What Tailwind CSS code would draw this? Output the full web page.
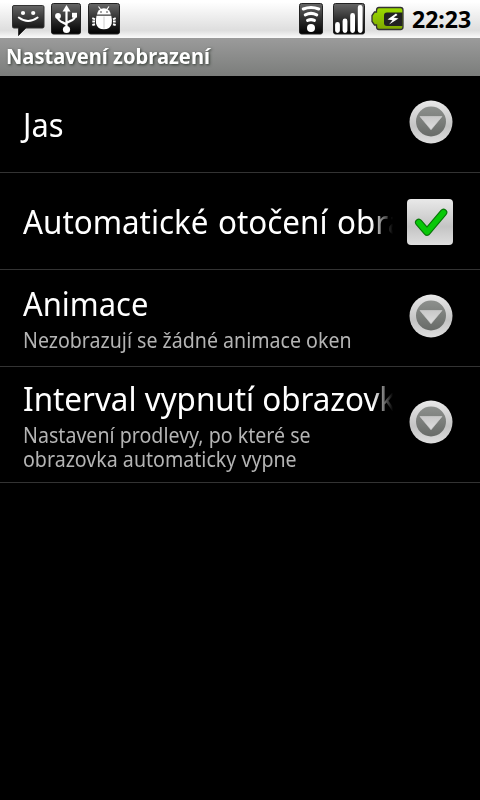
<!DOCTYPE html>
<html lang="cs">
<head>
<meta charset="utf-8">
<title>Nastavení zobrazení</title>
<script src="https://cdn.jsdelivr.net/npm/@tailwindcss/browser@4"></script>
</head>
<body class="bg-black text-white w-[480px] h-[800px] overflow-hidden font-['Noto_Sans','Open_Sans',sans-serif]">
<svg class="absolute w-0 h-0" aria-hidden="true">
  <defs>
    <linearGradient id="dark" x1="0" y1="0" x2="0" y2="1"><stop offset="0" stop-color="#666"/><stop offset=".5" stop-color="#303030"/><stop offset="1" stop-color="#000"/></linearGradient>
    <linearGradient id="ring" x1="0" y1="0" x2="0" y2="1"><stop offset="0" stop-color="#e9e9e9"/><stop offset=".6" stop-color="#c4c4c4"/><stop offset="1" stop-color="#dedede"/></linearGradient>
    <linearGradient id="disc" x1="0" y1="0" x2="0" y2="1"><stop offset="0" stop-color="#8d908d"/><stop offset="1" stop-color="#686b68"/></linearGradient>
    <linearGradient id="tri" x1="0" y1="0" x2="0" y2="1"><stop offset="0" stop-color="#c8c8c8"/><stop offset="1" stop-color="#dedede"/></linearGradient>
    <linearGradient id="green" x1="0" y1="0" x2="0" y2="1"><stop offset="0" stop-color="#9bdc00"/><stop offset="1" stop-color="#7fa800"/></linearGradient>
    <symbol id="arrow" viewBox="0 0 44 44">
      <circle cx="22" cy="22" r="21.500" fill="url(#ring)"/>
      <circle cx="22" cy="21.500" r="15" fill="url(#disc)"/>
      <path d="M11 16.500h22L22 29.800z" fill="url(#tri)" stroke="#d4d4d4" stroke-width=".6" stroke-linejoin="round"/>
    </symbol>
  </defs>
</svg>

<header class="flex h-[38px] bg-linear-to-b from-white from-5% via-[#dedede] via-80% to-[#fafafa]">
  <svg class="ml-[11px] w-[34px] h-[38px]" viewBox="0 0 34 38">
    <path d="M3 5.500h28.500a1.500 1.500 0 0 1 1.500 1.500v19.500a1.500 1.500 0 0 1-1.500 1.500H15L7.500 35.500V28H3a1.500 1.500 0 0 1-1.500-1.500V7A1.500 1.500 0 0 1 3 5.500z" fill="url(#dark)" stroke="#333" stroke-width="1"/>
    <circle cx="12" cy="13" r="2.100" fill="#fff"/><circle cx="22.200" cy="13" r="2.100" fill="#fff"/>
    <path d="M7.800 17.500q9.300 7 18.800 0" fill="none" stroke="#fff" stroke-width="2" stroke-linecap="round"/>
  </svg>
  <svg class="ml-[5px] w-[32px] h-[38px]" viewBox="0 0 32 38">
    <rect x="1.500" y="3.500" width="29" height="30.500" rx="2" fill="url(#dark)" stroke="#222"/>
    <path d="M16.500 29V10M16.500 25c-1-3-8.500-2-9-8.500M16.500 23.500c1-3 8.500-2 8.500-7.500" fill="none" stroke="#fff" stroke-width="2.200"/>
    <path d="M16.500 5l4 6.500h-8z" fill="#fff"/><circle cx="16.500" cy="29.500" r="3.600" fill="#fff"/><circle cx="8" cy="16" r="2.900" fill="#fff"/><rect x="22" y="12.800" width="5" height="4.800" fill="#fff"/>
  </svg>
  <svg class="ml-[6px] w-[32px] h-[38px]" viewBox="0 0 32 38">
    <rect x=".5" y="3.500" width="31" height="30.500" rx="2" fill="url(#dark)" stroke="#222"/>
    <path d="M10.500 6.500l2.500 3.500M21 6.500l-2.500 3.500" fill="none" stroke="#fff" stroke-width="1.200"/>
    <path d="M9 14.600a6.900 6.300 0 0 1 13.800 0z" fill="#fff"/>
    <circle cx="13" cy="12" r=".8" fill="#333"/><circle cx="19" cy="12" r=".8" fill="#333"/>
    <path d="M8.500 15.800h14.800q1 4 .4 8-1.500 5.500-7.800 5.500t-7.800-5.500q-.6-4 .4-8z" fill="#fff"/>
    <path d="M4.300 18.200l2.700 1.200M4.300 21.500H7M4.300 25l2.700-.8M27.700 18.200l-2.700 1.200M27.700 21.500H25M27.700 25l-2.700-.8" fill="none" stroke="#fff" stroke-width="2"/>
    <path d="M16 16.500v12" stroke="#ccc" stroke-width="1"/>
  </svg>
  <svg class="ml-[179px] w-[24px] h-[38px]" viewBox="0 0 24 38">
    <rect x=".5" y="3.500" width="23" height="30.500" rx="2" fill="url(#dark)" stroke="#222"/>
    <path d="M4.300 9q7.700-3 15.400 0M6.300 14.800q5.700-2.800 11.400 0M8.600 20.400q3.400-1.600 6.800 0" fill="none" stroke="#fff" stroke-width="3.100" stroke-linecap="round"/>
    <circle cx="12" cy="28" r="4" fill="#fff"/>
  </svg>
  <svg class="ml-[10px] w-[32px] h-[38px]" viewBox="0 0 32 38">
    <rect x=".5" y="3.500" width="31" height="30.500" rx="2" fill="url(#dark)" stroke="#222"/>
    <path d="M4.500 24.500v6M12 21v9.500M19.600 15.500v15M27.200 7.500v23" stroke="#fff" stroke-width="4.800" stroke-linecap="round"/>
  </svg>
  <svg class="ml-[6px] w-[33px] h-[38px]" viewBox="0 0 33 38">
    <path d="M8 7.500h21.500a2.500 2.500 0 0 1 2.500 2.500v17a2.500 2.500 0 0 1-2.500 2.500H8q-2.500 0-2.500-3v-1.500H3.500L1 21.500v-6L3.500 12h2v-1.500q0-3 2.500-3z" fill="url(#green)" stroke="#333" stroke-width="1.300"/>
    <path d="M31.400 12.500H16q-3 0-3 3v7.500q0 3 3 3h15.400z" fill="#222"/>
    <path d="M25 13.500l-8.500 6 5 .8-3.500 4.200 9.500-6-5-1 4-2.500z" fill="#fff"/>
  </svg>
  <div class="ml-[8px] w-[60px] text-black text-[23px] font-bold leading-[38px]">22:23</div>
</header>

<div class="h-[38px] pl-[6px] bg-linear-to-b from-[#9b9b9b] to-[#7b7d7b] text-[21px] font-bold leading-[37px] [text-shadow:1px_1px_3px_#303830]"><h1 class="w-max whitespace-nowrap origin-left scale-x-[0.958]">Nastavení zobrazení</h1></div>

<main>
  <section class="flex h-[97px] border-b border-[#333] pl-[23px] items-center">
    <div class="w-[370px] pt-[2px] text-[33px] leading-[44px]"><div class="w-max whitespace-nowrap origin-left scale-x-[0.934]">Jas</div></div>
    <svg class="ml-[16px] -mt-[5px] w-[44px] h-[44px]"><use href="#arrow"/></svg>
  </section>
  <section class="flex h-[97px] border-b border-[#333] pl-[23px] items-center">
    <div class="w-[370px] pt-[2px] overflow-hidden text-[33px] leading-[44px] mask-r-from-black mask-r-from-[348px] mask-r-to-[370px]"><div class="w-max whitespace-nowrap origin-left scale-x-[0.95] [word-spacing:1.5px]">Automatické otočení obrazovky</div></div>
    <svg class="ml-[14px] mt-[2px] w-[46px] h-[46px]" viewBox="0 0 46 46">
      <rect width="46" height="46" rx="4" fill="url(#ring)"/>
      <path d="M11.800 23.500l8.200 9.500L36.500 13.500" fill="none" stroke="#087508" stroke-width="7.600" stroke-linecap="round" stroke-linejoin="round"/>
      <path d="M11.800 23.500l8.200 9.500L36.500 13.500" fill="none" stroke="#08c808" stroke-width="5.400" stroke-linecap="round" stroke-linejoin="round"/>
    </svg>
  </section>
  <section class="flex h-[97px] border-b border-[#333] pl-[23px]">
    <div class="w-[370px] pt-[14px]">
      <div class="text-[33px] leading-[40px]"><div class="w-max whitespace-nowrap origin-left scale-x-[0.937]">Animace</div></div>
      <p class="mt-[4px] w-max text-[21px] leading-[24px] text-[#b4b4b4] origin-left scale-x-[0.933]">Nezobrazují se žádné animace oken</p>
    </div>
    <svg class="ml-[16px] mt-[24px] w-[44px] h-[44px]"><use href="#arrow"/></svg>
  </section>
  <section class="flex h-[116px] border-b border-[#333] pl-[23px]">
    <div class="w-[370px] pt-[12px]">
      <div class="overflow-hidden text-[33px] leading-[40px] mask-r-from-black mask-r-from-[350px] mask-r-to-[370px]"><div class="w-max whitespace-nowrap origin-left scale-x-[0.95]">Interval vypnutí obrazovky</div></div>
      <p class="mt-[4px] w-max text-[21px] leading-[24px] text-[#b4b4b4] origin-left scale-x-[0.934]">Nastavení prodlevy, po které se<br>obrazovka automaticky vypne</p>
    </div>
    <svg class="ml-[16px] mt-[33px] w-[44px] h-[44px]"><use href="#arrow"/></svg>
  </section>
</main>
</body>
</html>
